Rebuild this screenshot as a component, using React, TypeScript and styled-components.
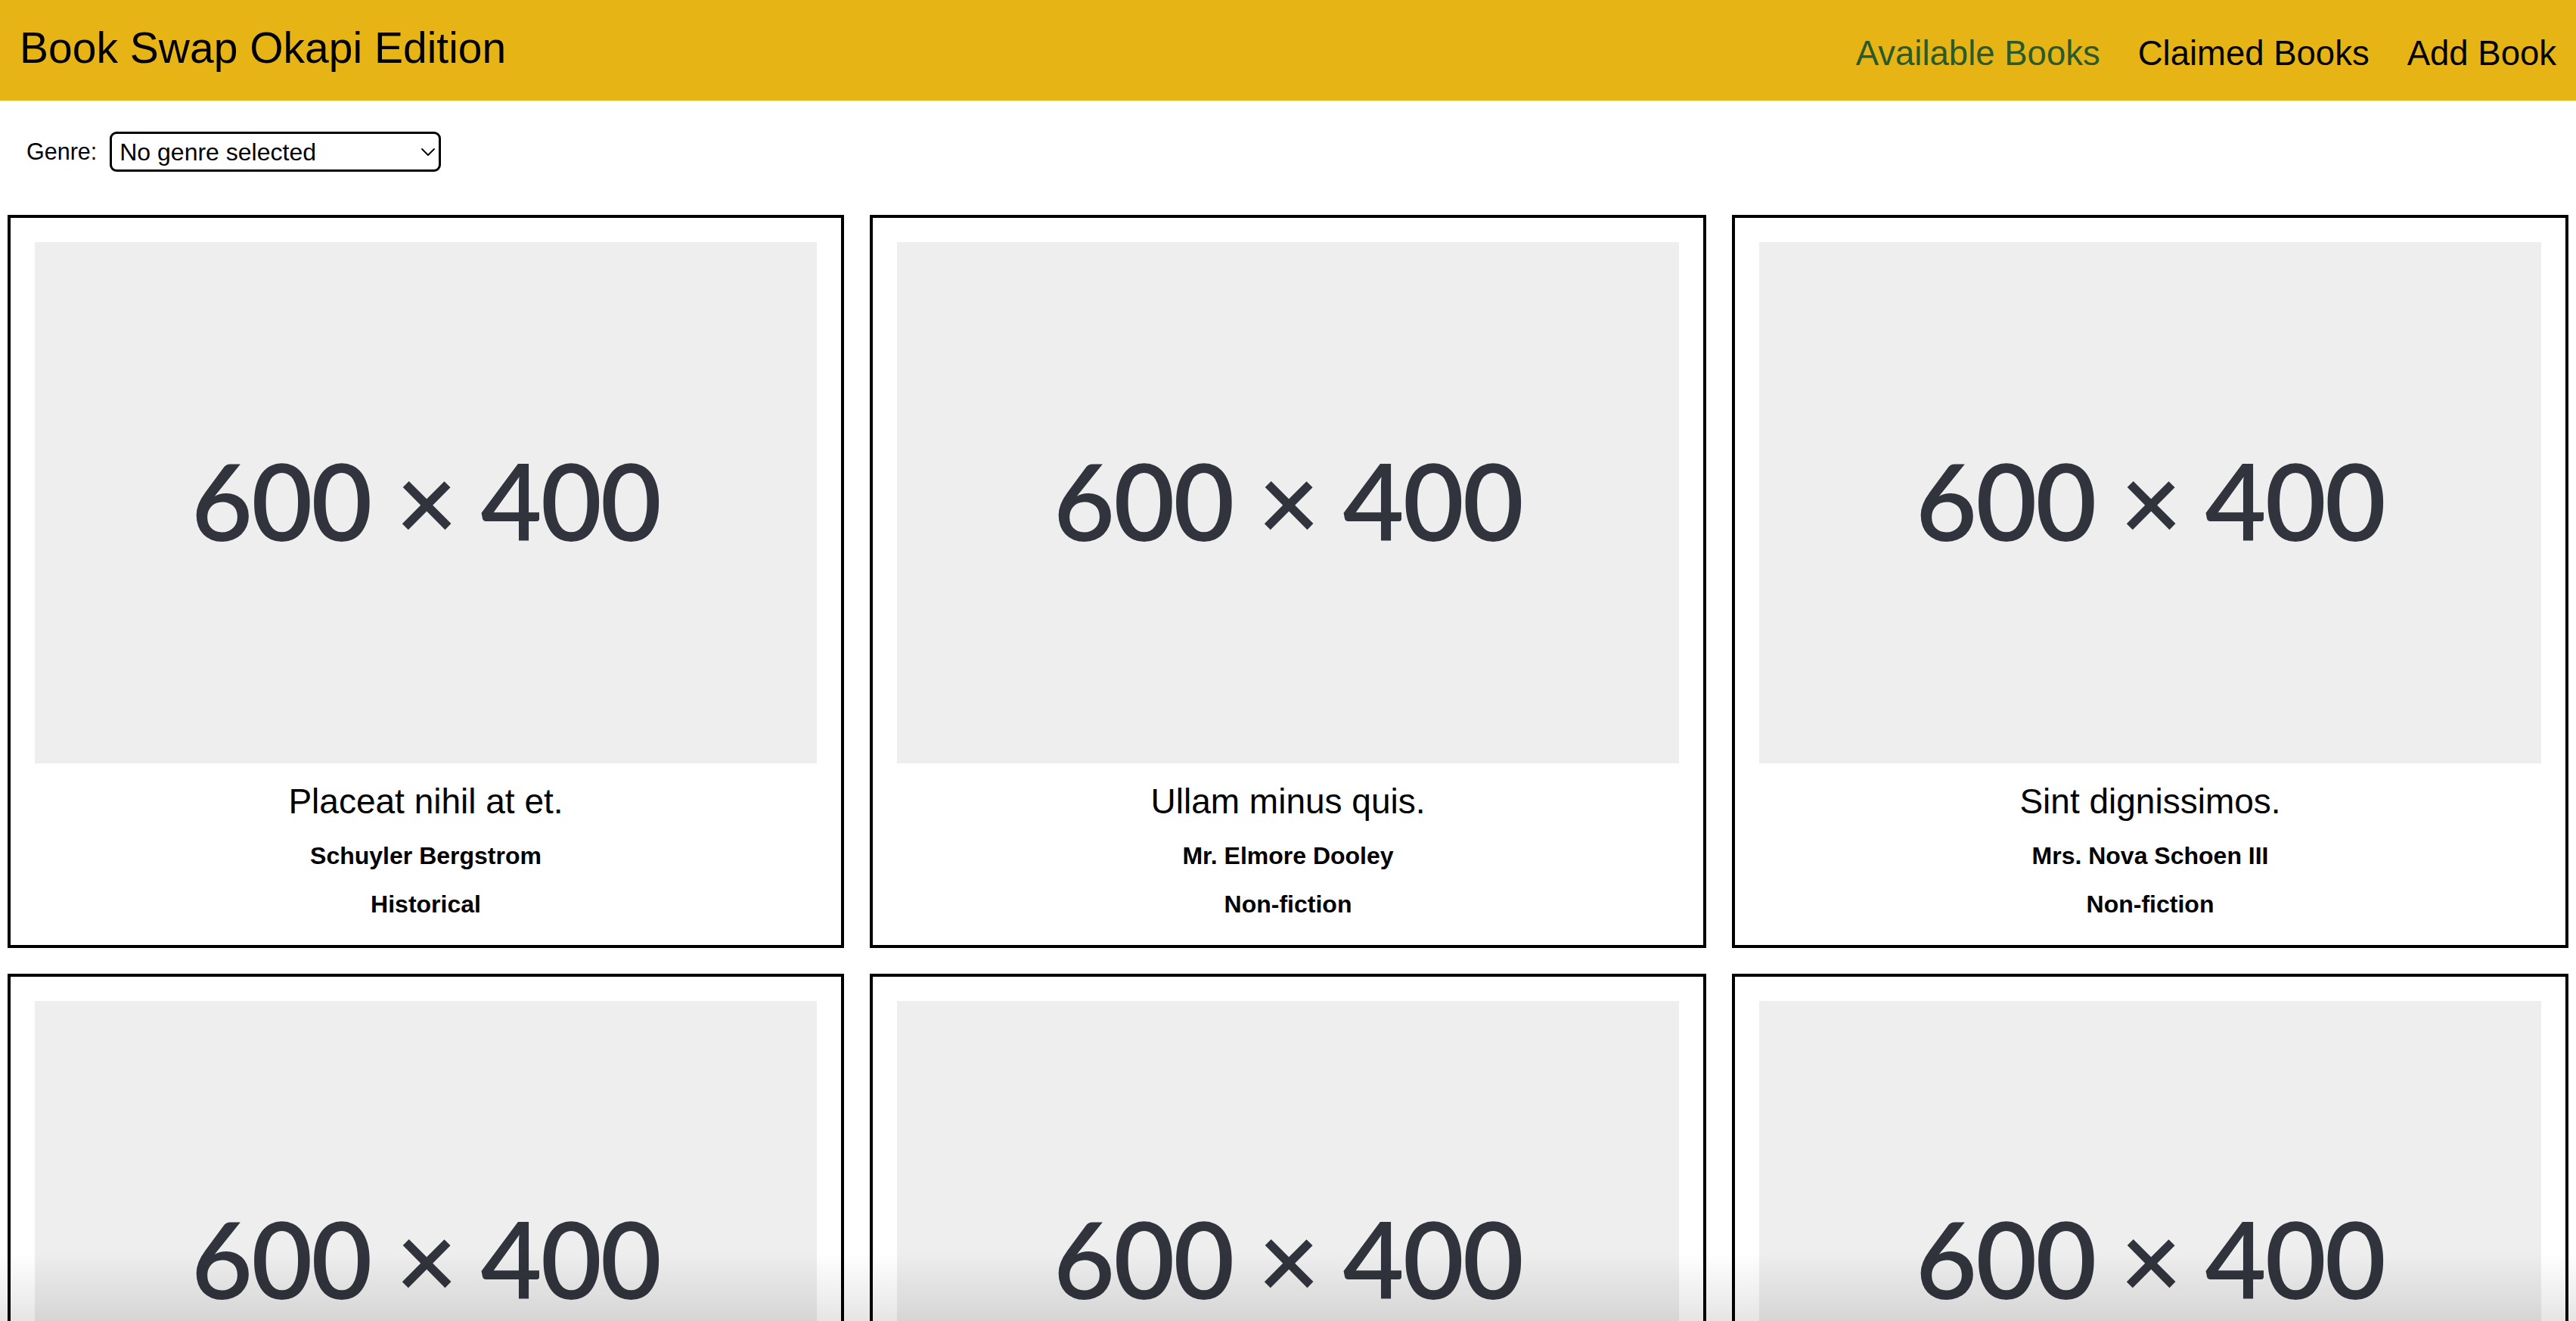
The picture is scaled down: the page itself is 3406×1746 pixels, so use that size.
import React from "react";
import styled, { createGlobalStyle } from "styled-components";

const GlobalStyle = createGlobalStyle`
  html, body {
    margin: 0;
    padding: 0;
    background: #ffffff;
  }
  body {
    font-family: "Liberation Sans", Arial, sans-serif;
    color: #000000;
  }
  * {
    box-sizing: border-box;
  }
`;

const Header = styled.header`
  display: flex;
  justify-content: space-between;
  align-items: flex-start;
  height: 133px;
  padding: 0 26px;
  background: #e6b414;
`;

const Title = styled.h1`
  margin: 35px 0 0;
  font-size: 57px;
  font-weight: 400;
  line-height: 1;
`;

const Nav = styled.nav`
  display: flex;
  gap: 50px;
  margin-top: 48px;
`;

const NavLink = styled.a<{ $active?: boolean }>`
  font-size: 45.5px;
  line-height: 1;
  color: ${(p) => (p.$active ? "#285a2e" : "#000000")};
  text-decoration: none;
`;

const FilterBar = styled.div`
  display: flex;
  align-items: center;
  gap: 17px;
  padding: 41px 0 0 35px;
`;

const Label = styled.label`
  font-size: 30.5px;
  line-height: 1.15;
`;

const SelectWrap = styled.span`
  position: relative;
  display: inline-flex;
`;

const Select = styled.select`
  appearance: none;
  width: 438px;
  height: 53px;
  border: 3px solid #000000;
  border-radius: 9px;
  padding: 0 40px 0 10px;
  font-family: "Liberation Sans", Arial, sans-serif;
  font-size: 32px;
  background: #ffffff;
  color: #000000;
`;

const Chevron = styled.svg`
  position: absolute;
  right: 8px;
  top: 50%;
  transform: translateY(-50%);
  pointer-events: none;
`;

const Grid = styled.main`
  display: grid;
  grid-template-columns: repeat(3, 1fr);
  gap: 34px;
  padding: 57px 10px 40px;
`;

const Card = styled.article`
  display: flex;
  flex-direction: column;
  align-items: center;
  text-align: center;
  border: 4px solid #000000;
  padding: 32px 32px 35px;
`;

const Placeholder = styled.div`
  width: 100%;
  aspect-ratio: 3 / 2;
  display: flex;
  align-items: center;
  justify-content: center;
  padding-bottom: 8px;
  background: #eeeeee;
  color: #31343c;
  font-family: Lato, "Liberation Sans", sans-serif;
  font-size: 140px;
  font-weight: 600;
  letter-spacing: -2px;
  line-height: 1;
`;

const BookTitle = styled.h2`
  margin: 24px 0 0;
  font-size: 46px;
  font-weight: 400;
  line-height: 1.15;
`;

const Meta = styled.p`
  margin: 27px 0 0;
  font-size: 32px;
  font-weight: 700;
  line-height: 1.15;
`;

const BottomFade = styled.div`
  position: fixed;
  left: 0;
  right: 0;
  bottom: 0;
  height: 90px;
  pointer-events: none;
  background: linear-gradient(to bottom, rgba(0, 0, 0, 0), rgba(0, 0, 0, 0.1));
`;

const books = [
  { title: "Placeat nihil at et.", author: "Schuyler Bergstrom", genre: "Historical" },
  { title: "Ullam minus quis.", author: "Mr. Elmore Dooley", genre: "Non-fiction" },
  { title: "Sint dignissimos.", author: "Mrs. Nova Schoen III", genre: "Non-fiction" },
  { title: "Voluptas ut rerum.", author: "Kayla Hermiston", genre: "Fantasy" },
  { title: "Quia odit eius.", author: "Dr. Lennie Mayer", genre: "Mystery" },
  { title: "Aut sed dolores.", author: "Jalen Kuhic", genre: "Romance" },
];

export default function App() {
  return (
    <>
      <GlobalStyle />
      <Header>
        <Title>Book Swap Okapi Edition</Title>
        <Nav>
          <NavLink href="#" $active>
            Available Books
          </NavLink>
          <NavLink href="#">Claimed Books</NavLink>
          <NavLink href="#">Add Book</NavLink>
        </Nav>
      </Header>
      <FilterBar>
        <Label htmlFor="genre">Genre:</Label>
        <SelectWrap>
          <Select id="genre" defaultValue="">
            <option value="">No genre selected</option>
            <option value="historical">Historical</option>
            <option value="non-fiction">Non-fiction</option>
          </Select>
          <Chevron width="18" height="10" viewBox="0 0 18 10" fill="none">
            <path d="M1 1 L9 9 L17 1" stroke="#000" strokeWidth="1.8" strokeLinecap="round" strokeLinejoin="round" />
          </Chevron>
        </SelectWrap>
      </FilterBar>
      <Grid>
        {books.map((b) => (
          <Card key={b.title}>
            <Placeholder>600 × 400</Placeholder>
            <BookTitle>{b.title}</BookTitle>
            <Meta>{b.author}</Meta>
            <Meta>{b.genre}</Meta>
          </Card>
        ))}
      </Grid>
      <BottomFade />
    </>
  );
}
